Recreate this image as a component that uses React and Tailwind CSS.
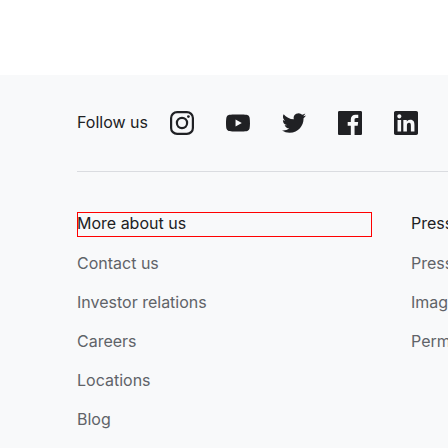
const socials = [
  {
    name: 'Instagram',
    art: (
      <>
        <rect x="1.1" y="1.1" width="21.8" height="21.8" rx="6" fill="none" stroke="currentColor" strokeWidth="2.2" />
        <circle cx="12" cy="12" r="5.1" fill="none" stroke="currentColor" strokeWidth="2.2" />
        <circle cx="18.4" cy="5.6" r="1.4" />
      </>
    ),
  },
  {
    name: 'YouTube',
    art: (
      <path d="M23.498 6.186a3.016 3.016 0 0 0-2.122-2.136C19.505 3.545 12 3.545 12 3.545s-7.505 0-9.377.505A3.017 3.017 0 0 0 .502 6.186C0 8.07 0 12 0 12s0 3.93.502 5.814a3.016 3.016 0 0 0 2.122 2.136c1.871.505 9.376.505 9.376.505s7.505 0 9.377-.505a3.015 3.015 0 0 0 2.122-2.136C24 15.93 24 12 24 12s0-3.93-.502-5.814zM9.545 15.568V8.432L15.818 12l-6.273 3.568z" />
    ),
  },
  {
    name: 'Twitter',
    art: (
      <path d="M23.953 4.57a10 10 0 01-2.825.775 4.958 4.958 0 002.163-2.723c-.951.555-2.005.959-3.127 1.184a4.92 4.92 0 00-8.384 4.482C7.69 8.095 4.067 6.13 1.64 3.162a4.822 4.822 0 00-.666 2.475c0 1.71.87 3.213 2.188 4.096a4.904 4.904 0 01-2.228-.616v.06a4.923 4.923 0 003.946 4.827 4.996 4.996 0 01-2.212.085 4.936 4.936 0 004.604 3.417 9.867 9.867 0 01-6.102 2.105c-.39 0-.779-.023-1.17-.067a13.995 13.995 0 007.557 2.209c9.053 0 13.998-7.496 13.998-13.985 0-.21 0-.42-.015-.63A9.935 9.935 0 0024 4.59z" />
    ),
  },
  {
    name: 'Facebook',
    art: (
      <path d="M22.676 0H1.324C.593 0 0 .593 0 1.324v21.352C0 23.408.593 24 1.324 24h11.494v-9.294H9.689v-3.621h3.129V8.41c0-3.099 1.894-4.785 4.659-4.785 1.325 0 2.464.097 2.796.141v3.24h-1.921c-1.5 0-1.792.721-1.792 1.771v2.311h3.584l-.465 3.63H16.56V24h6.115c.733 0 1.325-.592 1.325-1.324V1.324C24 .593 23.408 0 22.676 0" />
    ),
  },
  {
    name: 'LinkedIn',
    art: (
      <path d="M20.447 20.452h-3.554v-5.569c0-1.328-.027-3.037-1.852-3.037-1.853 0-2.136 1.445-2.136 2.939v5.667H9.351V9h3.414v1.561h.046c.477-.9 1.637-1.85 3.37-1.85 3.601 0 4.267 2.37 4.267 5.455v6.286zM5.337 7.433c-1.144 0-2.063-.926-2.063-2.065 0-1.138.92-2.063 2.063-2.063 1.14 0 2.064.925 2.064 2.063 0 1.139-.925 2.065-2.064 2.065zm1.782 13.019H3.555V9h3.564v11.452zM22.225 0H1.771C.792 0 0 .774 0 1.729v20.542C0 23.227.792 24 1.771 24h20.451C23.2 24 24 23.227 24 22.271V1.729C24 .774 23.2 0 22.222 0h.003z" />
    ),
  },
];

const columns = [
  {
    title: 'More about us',
    outlined: true,
    links: ['Contact us', 'Investor relations', 'Careers', 'Locations', 'Blog'],
  },
  {
    title: 'Press',
    outlined: false,
    links: ['Press corner', 'Images & B-roll', 'Permissions'],
  },
];

function LinkColumn({ title, outlined, links }) {
  return (
    <section className="w-[295px] shrink-0">
      <h2 className={outlined ? 'pb-[3px] outline outline-1 -outline-offset-1 outline-[#f00]' : 'pb-[3px]'}>
        {title}
      </h2>
      <ul className="mt-[15px] flex flex-col gap-[17px] text-[#5f6368]">
        {links.map((label) => (
          <li key={label}>
            <a href="#">{label}</a>
          </li>
        ))}
      </ul>
    </section>
  );
}

export default function App() {
  return (
    <div className="flex min-h-screen flex-col overflow-hidden bg-white pt-[75px] font-[Inter,sans-serif] text-base leading-[22px] text-[#202124]">
      <footer className="grow bg-[#f8f9fa] pl-[77px]">
        <div className="flex items-start border-b border-[#dadce0] py-9">
          <h2 className="w-[93px] shrink-0 whitespace-nowrap">Follow us</h2>
          <ul className="flex gap-8">
            {socials.map(({ name, art }) => (
              <li key={name}>
                <a href="#" aria-label={name} className="block size-6">
                  <svg viewBox="0 0 24 24" className="size-6" fill="currentColor" aria-hidden="true">
                    {art}
                  </svg>
                </a>
              </li>
            ))}
          </ul>
        </div>
        <nav aria-label="Footer" className="flex gap-[39px] pt-10 pb-4">
          {columns.map((column) => (
            <LinkColumn key={column.title} {...column} />
          ))}
        </nav>
      </footer>
    </div>
  );
}
